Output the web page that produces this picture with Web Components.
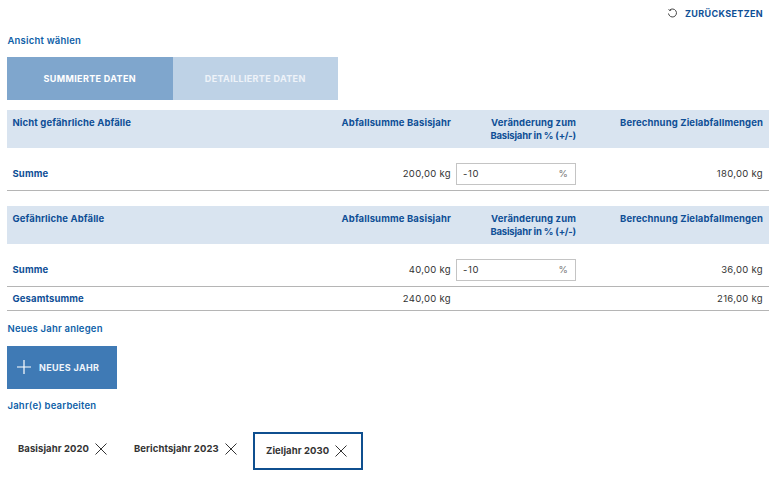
<!DOCTYPE html>
<html lang="de">
<head>
<meta charset="utf-8">
<title>Zielabfallmengen</title>
<style>
  html, body { margin: 0; background: #fff; }
  body { font-family: "Inter", "Liberation Sans", sans-serif; font-size: 9.5px; color: #333; letter-spacing: .2px; }
</style>
</head>
<body>
<waste-page>
  <reset-link>ZURÜCKSETZEN</reset-link>
  <section-label style="margin-top:14px">Ansicht wählen</section-label>
  <view-tabs style="margin-top:10px"></view-tabs>
  <waste-table style="margin-top:10px" title="Nicht gefährliche Abfälle" base="200,00 kg" target="180,00 kg"></waste-table>
  <waste-table style="margin-top:15.3px" title="Gefährliche Abfälle" base="40,00 kg" target="36,00 kg" total-base="240,00 kg" total-target="216,00 kg"></waste-table>
  <section-label style="margin-top:11.3px">Neues Jahr anlegen</section-label>
  <add-button style="margin-top:11px">NEUES JAHR</add-button>
  <section-label style="margin-top:10px">Jahr(e) bearbeiten</section-label>
  <div style="display:flex;margin-top:20px">
    <year-tab style="width:116px">Basisjahr 2020</year-tab>
    <year-tab style="width:130px">Berichtsjahr 2023</year-tab>
    <year-tab active style="width:110px">Zieljahr 2030</year-tab>
  </div>
</waste-page>

<script>
class WastePage extends HTMLElement {
  constructor() {
    super();
    this.attachShadow({ mode: 'open' }).innerHTML = `
      <style>
        :host { display: block; padding: 6px 7px 0 7px; width: 762px; }
      </style>
      <slot></slot>`;
  }
}

class ResetLink extends HTMLElement {
  constructor() {
    super();
    this.attachShadow({ mode: 'open' }).innerHTML = `
      <style>
        :host {
          display: flex; justify-content: flex-end; align-items: center; gap: 7px;
          height: 14px; padding-right: 6px;
          color: #0f4f96; font-size: 9px; font-weight: 700; letter-spacing: .35px;
        }
        svg { display: block; }
      </style>
      <svg width="11" height="11" viewBox="0 0 11 11" fill="none" stroke="#444" stroke-width="1">
        <path d="M2.6 2.2A4 4 0 1 1 1.5 5.5"/>
        <path d="M1.6 1.2l1 1.4 1.6-.4" stroke-width=".9"/>
      </svg>
      <slot></slot>`;
  }
}

class SectionLabel extends HTMLElement {
  constructor() {
    super();
    this.attachShadow({ mode: 'open' }).innerHTML = `
      <style>
        :host { display: block; height: 13px; line-height: 13px; padding-left: .5px; color: #0f5fa8; font-size: 9.5px; font-weight: 600; }
      </style>
      <slot></slot>`;
  }
}

class ViewTabs extends HTMLElement {
  constructor() {
    super();
    this.attachShadow({ mode: 'open' }).innerHTML = `
      <style>
        :host { display: flex; width: 331px; height: 43px; color: #fff; font-size: 9px; font-weight: 700; letter-spacing: .35px; }
        div { flex: 1; display: flex; align-items: center; justify-content: center; }
        .on { background: #7fa6cd; }
        .off { background: #bed2e6; color: #eef3f9; }
      </style>
      <div class="on">SUMMIERTE DATEN</div>
      <div class="off">DETAILLIERTE DATEN</div>`;
  }
}

class WasteTable extends HTMLElement {
  constructor() {
    super();
    this.attachShadow({ mode: 'open' });
  }

  connectedCallback() {
    const totalBase = this.getAttribute('total-base');
    const totalTarget = this.getAttribute('total-target');
    this.shadowRoot.innerHTML = `
      <style>
        :host { display: block; font-size: 9.5px; }
        .row {
          display: grid;
          grid-template-columns: 1fr 130px 120px 182px;
          column-gap: 5px;
          padding: 0 6px 0 5.5px;
        }
        .head {
          background: #d9e4f0; height: 37.7px; padding-top: 6px; box-sizing: border-box;
          line-height: 13px; color: #0f4f96; font-weight: 700; letter-spacing: .13px;
        }
        .head div:not(:first-child) { text-align: right; }
        .narrow { letter-spacing: -.2px; }
        .sum { align-items: center; height: 43px; padding-top: 10px; box-sizing: border-box; border-bottom: 1px solid #b5b5b5; }
        .total { align-items: center; height: 24px; box-sizing: border-box; border-bottom: 1px solid #b5b5b5; }
        .name { color: #0f4f96; font-weight: 700; letter-spacing: .13px; }
        .num { text-align: right; letter-spacing: .3px; }
      </style>
      <div class="row head">
        <div>${this.getAttribute('title')}</div>
        <div>Abfallsumme Basisjahr</div>
        <div>Veränderung zum<br><span class="narrow">Basisjahr in % (+/-)</span></div>
        <div>Berechnung Zielabfallmengen</div>
      </div>
      <div class="row sum">
        <div class="name">Summe</div>
        <div class="num">${this.getAttribute('base')}</div>
        <percent-input value="-10"></percent-input>
        <div class="num">${this.getAttribute('target')}</div>
      </div>
      ${totalBase ? `
      <div class="row total">
        <div class="name">Gesamtsumme</div>
        <div class="num">${totalBase}</div>
        <div></div>
        <div class="num">${totalTarget}</div>
      </div>` : ''}`;
  }
}

class PercentInput extends HTMLElement {
  constructor() {
    super();
    this.attachShadow({ mode: 'open' });
  }

  connectedCallback() {
    this.shadowRoot.innerHTML = `
      <style>
        :host {
          display: flex; justify-content: space-between; align-items: center;
          height: 22px; box-sizing: border-box; padding: 0 7px 0 6px;
          border: 1px solid #c4c4c4; background: #fff;
        }
        div { letter-spacing: .6px; }
        span { color: #777; }
      </style>
      <div>${this.getAttribute('value')}</div><span>%</span>`;
  }
}

class AddButton extends HTMLElement {
  constructor() {
    super();
    this.attachShadow({ mode: 'open' }).innerHTML = `
      <style>
        :host {
          display: flex; align-items: center; gap: 8px;
          width: 110px; height: 43px; box-sizing: border-box; padding-left: 10px;
          background: #3f7ab5; color: #eef4fa; font-size: 9px; font-weight: 700; letter-spacing: .35px;
        }
        svg { display: block; }
      </style>
      <svg width="14" height="14" viewBox="0 0 14 14" stroke="#fff" stroke-width="1.2"><path d="M7 0v14M0 7h14"/></svg>
      <slot></slot>`;
  }
}

class YearTab extends HTMLElement {
  constructor() {
    super();
    this.attachShadow({ mode: 'open' }).innerHTML = `
      <style>
        :host {
          display: flex; align-items: center; gap: 6px;
          height: 38px; box-sizing: border-box; padding: 0 0 4px 11px;
          color: #333; font-weight: 700; font-size: 9.5px; letter-spacing: .08px;
        }
        :host([active]) { border: 2px solid #0f4f8f; padding: 0 0 0 11px; }
        svg { display: block; }
      </style>
      <slot></slot>
      <svg width="12" height="12" viewBox="0 0 12 12" stroke="#333" stroke-width="1"><path d="M.5.5l11 11M11.5.5l-11 11"/></svg>`;
  }
}

customElements.define('waste-page', WastePage);
customElements.define('reset-link', ResetLink);
customElements.define('section-label', SectionLabel);
customElements.define('view-tabs', ViewTabs);
customElements.define('waste-table', WasteTable);
customElements.define('percent-input', PercentInput);
customElements.define('add-button', AddButton);
customElements.define('year-tab', YearTab);
</script>
</body>
</html>
